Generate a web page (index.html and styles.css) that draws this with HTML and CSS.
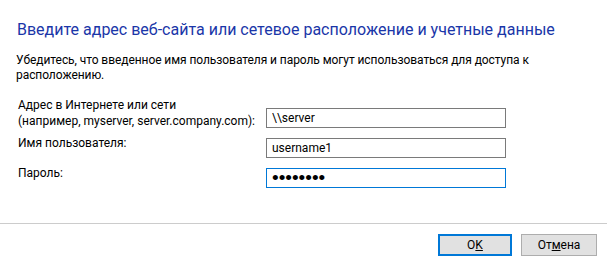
FILE: index.html
```html
<!DOCTYPE html>
<html>
<head>
    <title>Добавить сетевое расположение</title>
    <link rel="stylesheet" href="styles.css">
</head>
<body>
    <div class="dialog">
        <div class="content">
            <h1 class="title">Введите адрес веб-сайта или сетевое расположение и учетные данные</h1>
            <p class="note">Убедитесь, что введенное имя пользователя и пароль могут использоваться для доступа к<br>расположению.</p>
            <div class="form">
                <label class="label two-line" for="address">Адрес в Интернете или сети<br>(например, myserver, server.company.com):</label>
                <input class="field last" id="address" type="text" value="\\server">
                <label class="label" for="user">Имя пользователя:</label>
                <input class="field" id="user" type="text" value="username1">
                <label class="label" for="pass">Пароль:</label>
                <input class="field focused secret" id="pass" type="password" value="password">
            </div>
        </div>
        <div class="footer">
            <button class="btn default">O<u>K</u></button>
            <button class="btn">От<u>м</u>ена</button>
        </div>
    </div>
</body>
</html>
```

FILE: styles.css
```css
body {
    margin: 0;
    background: #fff;
    font-family: Roboto, "Liberation Sans", sans-serif;
    font-size: 12px;
    color: #000;
}
.dialog {
    width: 607px;
    height: 269px;
    display: flex;
    flex-direction: column;
}
.content {
    padding: 20px 17px 0 17px;
    height: 203px;
}
.title {
    margin: 0;
    font-size: 16px;
    font-weight: normal;
    line-height: 20px;
    color: #1a36a8;
    white-space: nowrap;
}
.note {
    margin: 13px 0 0 -1px;
    line-height: 15px;
    letter-spacing: -0.07px;
    white-space: nowrap;
}
.form {
    display: grid;
    grid-template-columns: 248px 240px;
    row-gap: 10px;
    margin-top: 13px;
    padding-left: 1px;
}
.label {
    line-height: 14px;
    align-self: start;
    margin-top: -2px;
}
.label.two-line {
    line-height: 16px;
    margin: 1px 0 -1px 0;
}
.field {
    box-sizing: border-box;
    height: 20px;
    width: 240px;
    margin: 0;
    padding: 0 5px;
    border: 1px solid #7a7a7a;
    font-family: inherit;
    font-size: 12px;
    color: #000;
    outline: none;
}
.field.last {
    align-self: end;
}
.field.focused {
    border-color: #0078d7;
}
.field.secret {
    font-family: "Liberation Sans", sans-serif;
    font-size: 19px;
    padding: 0 5px;
}
.footer {
    border-top: 1px solid #cccccc;
    display: flex;
    justify-content: flex-end;
    gap: 9px;
    padding: 10px 10px 0 0;
}
.btn {
    box-sizing: border-box;
    width: 76px;
    height: 22px;
    background: #e1e1e1;
    border: 1px solid #adadad;
    font-family: inherit;
    font-size: 12px;
    color: #000;
    padding: 0;
}
.btn.default {
    width: 74px;
    border: 2px solid #0078d7;
}
```
